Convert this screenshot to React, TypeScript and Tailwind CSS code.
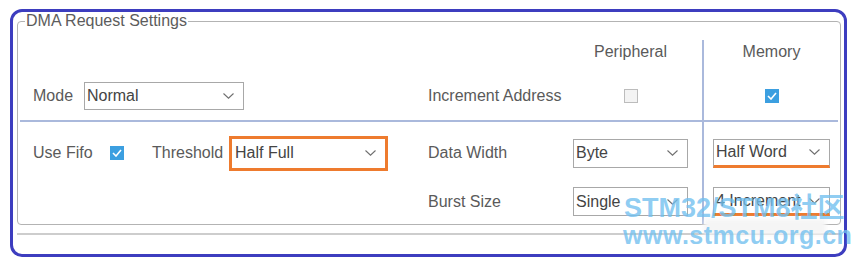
import React from "react";

function Chevron() {
  return (
    <svg width="11" height="6" viewBox="0 0 11 6" className="shrink-0">
      <polyline points="0.5,0.5 5.5,5.2 10.5,0.5" fill="none" stroke="#6f6f6f" strokeWidth="1.1" />
    </svg>
  );
}

function Select({ value, className }: { value: string; className: string }) {
  return (
    <div className={`flex items-center justify-between bg-white pl-[2px] pr-[9px] text-[#444] ${className}`}>
      <span className="leading-none">{value}</span>
      <Chevron />
    </div>
  );
}

function CheckOn() {
  return (
    <div className="w-[14px] h-[14px] bg-[#3c9fe0] flex items-center justify-center">
      <svg width="10" height="8" viewBox="0 0 10 8">
        <polyline points="1,4 4,7 9,1" fill="none" stroke="#ffffff" strokeWidth="1.6" />
      </svg>
    </div>
  );
}

function CheckOff() {
  return <div className="w-[14px] h-[14px] border border-[#bcbcbc] bg-[#f3f3f3]" />;
}

export default function App() {
  return (
    <div
      className="relative w-[856px] h-[259px] bg-white overflow-hidden text-[16px] text-[#5a5a5a]"
      style={{ fontFamily: '"Liberation Sans", Arial, sans-serif' }}
    >
      <div className="ml-[10px] mt-[9px] w-[837px] h-[248px] border-[3px] border-[#3d3dbf] rounded-[12px]">
        <fieldset className="ml-[4px] mt-[0px] w-[824px] border border-[#b3b3b3] rounded-[4px]">
          <legend className="ml-[7px] px-[1px] leading-[18px] text-[#5c5c5c]">DMA Request Settings</legend>
          <div className="grid grid-cols-[402px_146px_136px_138px] grid-rows-[10px_32px_48px_2px_62px_40px]">
            {/* row 0 */}
            <div />
            <div />
            <div />
            <div />
            {/* row 1 headers */}
            <div />
            <div />
            <div className="flex items-start">
              <div className="ml-[7px] w-[115px] h-[24px] flex items-center justify-center">Peripheral</div>
            </div>
            <div className="border-l-2 border-[#aab9dc] flex items-start">
              <div className="ml-[9px] w-[117px] h-[24px] flex items-center justify-center">Memory</div>
            </div>
            {/* row 2 */}
            <div className="flex items-center pl-[15px]">
              <span className="w-[51px]">Mode</span>
              <Select value="Normal" className="w-[160px] h-[28px] border border-[#a8a8a8]" />
            </div>
            <div className="flex items-center pl-[8px]">Increment Address</div>
            <div className="flex items-center">
              <div className="ml-[7px] w-[115px] flex justify-center">
                <CheckOff />
              </div>
            </div>
            <div className="border-l-2 border-[#aab9dc] flex items-center">
              <div className="ml-[9px] w-[117px] flex justify-center">
                <CheckOn />
              </div>
            </div>
            {/* separator */}
            <div className="col-span-4 mx-[2px] bg-[#aab9dc]" />
            {/* row 4 */}
            <div className="flex items-center pl-[15px]">
              <span className="w-[77px]">Use Fifo</span>
              <CheckOn />
              <span className="ml-[28px] w-[77px]">Threshold</span>
              <Select value="Half Full" className="w-[159px] h-[35px] border-[3px] border-[#ee7b2e] pl-[3px] pr-[8px]" />
            </div>
            <div className="flex items-center pl-[8px]">Data Width</div>
            <div className="flex items-center">
              <Select value="Byte" className="ml-[7px] w-[115px] h-[29px] border border-[#a8a8a8]" />
            </div>
            <div className="border-l-2 border-[#aab9dc] flex items-center">
              <Select
                value="Half Word"
                className="ml-[9px] w-[117px] h-[29px] border border-[#a8a8a8] border-b-[3px] border-b-[#ee7b2e]"
              />
            </div>
            {/* row 5 */}
            <div />
            <div className="pt-[3px]">
              <div className="h-[29px] flex items-center pl-[8px]">Burst Size</div>
            </div>
            <div className="pt-[3px]">
              <Select value="Single" className="ml-[7px] w-[115px] h-[29px] border border-[#a8a8a8]" />
            </div>
            <div className="border-l-2 border-[#aab9dc] pt-[3px]">
              <Select
                value="4 Increment"
                className="ml-[9px] w-[117px] h-[29px] border border-[#a8a8a8] border-b-[3px] border-b-[#ee7b2e]"
              />
            </div>
          </div>
        </fieldset>
        <div className="ml-[4px] mt-[8px] w-[824px] h-[2px] bg-[#cdcdcd]" />
      </div>

      {/* watermark overlay */}
      <div className="absolute left-[704px] top-[219px] w-[122px] h-[16px] bg-[#f5f5f5] blur-[2px]" />
      <div
        className="absolute left-[624px] top-[195px] leading-none font-bold text-[27px] text-[#72c0ef]/80 whitespace-nowrap pointer-events-none"
        style={{ fontFamily: '"Liberation Sans", Arial, "Noto Sans CJK SC", sans-serif' }}
      >
        STM32/STM8社区
      </div>
      <div
        className="absolute left-[623px] top-[223px] leading-none font-bold text-[25px] tracking-[0.5px] text-[#72c0ef]/80 whitespace-nowrap pointer-events-none"
        style={{ fontFamily: '"Liberation Sans", Arial, sans-serif' }}
      >
        www.stmcu.org.cn
      </div>
    </div>
  );
}
